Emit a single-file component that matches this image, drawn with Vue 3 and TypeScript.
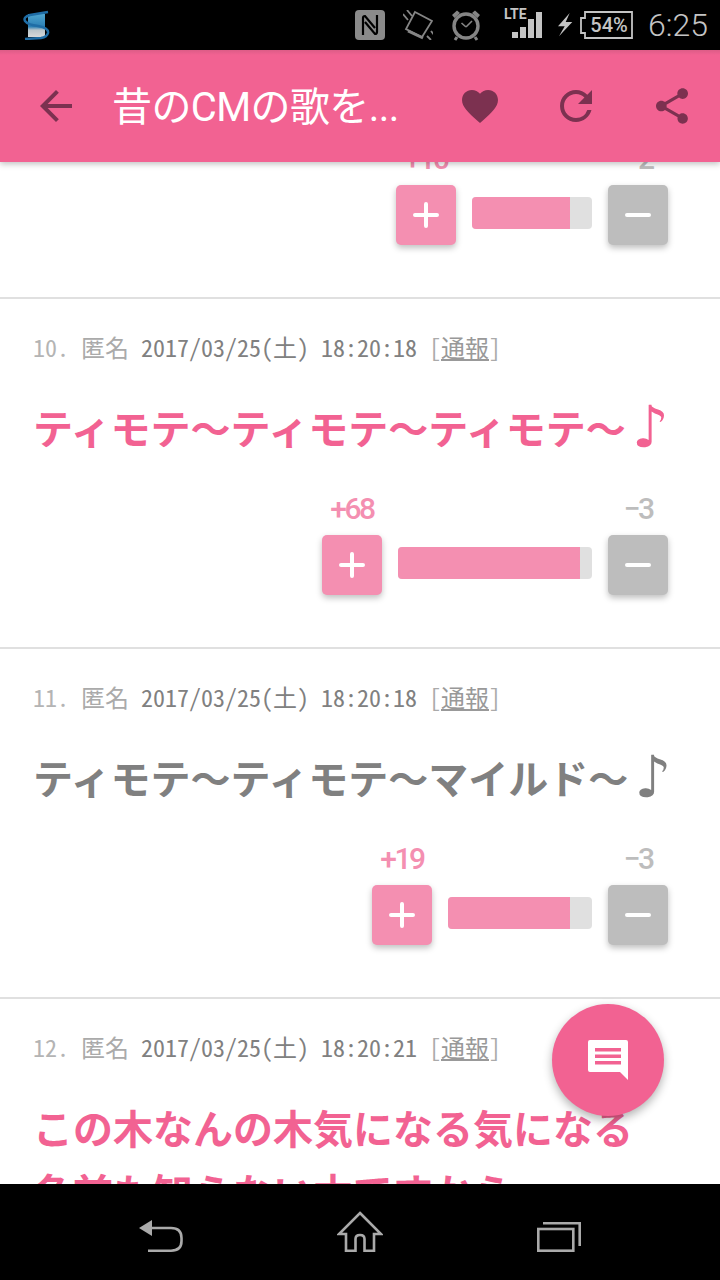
<script setup lang="ts">
interface Votes {
  plus: number
  minus: number
  barWidth: number
  fillWidth: number
}

interface Comment {
  no: number
  date?: string
  body?: string[]
  note?: boolean
  hot?: boolean
  votes?: Votes
}

const comments: Comment[] = [
  // only the vote row of this one is left below the app bar
  { no: 9, votes: { plus: 10, minus: 2, barWidth: 120, fillWidth: 98 } },
  {
    no: 10,
    date: '2017/03/25(土) 18:20:18',
    body: ['ティモテ〜ティモテ〜ティモテ〜'],
    note: true,
    hot: true,
    votes: { plus: 68, minus: 3, barWidth: 194, fillWidth: 182 }
  },
  {
    no: 11,
    date: '2017/03/25(土) 18:20:18',
    body: ['ティモテ〜ティモテ〜マイルド〜'],
    note: true,
    votes: { plus: 19, minus: 3, barWidth: 144, fillWidth: 122 }
  },
  {
    no: 12,
    date: '2017/03/25(土) 18:20:21',
    body: ['この木なんの木気になる気になる', '名前も知らない木ですから'],
    hot: true
  }
]
</script>

<template>
  <div class="phone">
    <div class="status-bar">
      <svg class="app-logo" width="28" height="30" viewBox="0 0 28 30">
        <defs>
          <linearGradient id="screen" x1="0" y1="0" x2="0" y2="1">
            <stop offset="0" stop-color="#4fa6d0" />
            <stop offset="0.55" stop-color="#2b7fb4" />
            <stop offset="0.7" stop-color="#b9c4ca" />
            <stop offset="1" stop-color="#d8d8d8" />
          </linearGradient>
        </defs>
        <rect x="5" y="4" width="17" height="23" fill="url(#screen)" />
        <path d="M25 2 7 5Q0 7 2 11 5 15 15 16 26 18 25 23 24 27 18 28L2 29" fill="none" stroke="#1f6da6" stroke-width="2.500" />
      </svg>
      <div class="status-icons">
        <svg width="30" height="30" viewBox="0 0 30 30">
          <rect width="30" height="30" rx="4" fill="#8a8a8a" />
          <path d="M8 25V8Q8 6 10 6L20 18M22 5V22Q22 24 20 24L10 12" fill="none" stroke="#000" stroke-width="2.200" />
        </svg>
        <svg class="vibrate" width="30" height="30" viewBox="0 0 30 30" fill="none" stroke="#858585" stroke-width="1.800">
          <path d="M12 2 29 11 19 27 3 19Z" />
          <path d="M5 21 20 28" stroke-width="3" />
          <path d="M0 4 5 10M4 0 9 6M24 26 28 30M28 21 32 26" />
        </svg>
        <svg class="alarm" width="30" height="32" viewBox="0 0 30 32" fill="none" stroke="#858585">
          <circle cx="15" cy="17" r="12" stroke-width="3.400" />
          <path d="M1 6 6 1.500 9 4 3.500 9ZM29 6 24 1.500 21 4 26.500 9Z" fill="#858585" stroke="none" />
          <path d="M15 18 10.500 14M15 18 21 12" stroke-width="1.600" />
          <path d="M6 28 4 31M24 28 26 31" stroke-width="3" />
        </svg>
        <div class="signal">
          <span class="lte">LTE</span>
          <div class="signal-bars">
            <i class="bar-1" />
            <i class="bar-2" />
            <i class="bar-3" />
            <i class="bar-4" />
          </div>
        </div>
        <svg class="bolt" width="16" height="24" viewBox="0 0 16 24">
          <path d="M12.700 0 1 13.300H7.700L2 23.300 15.300 9H8.700Z" fill="#c4c4c4" />
        </svg>
        <svg class="battery" width="54" height="28" viewBox="0 0 54 28">
          <path d="M6 1H53V27H6V22H2V7H6Z" fill="none" stroke="#c4c4c4" stroke-width="1.800" />
          <text x="30" y="21" text-anchor="middle" class="battery-text">54%</text>
        </svg>
        <span class="clock">6:25</span>
      </div>
    </div>

    <header class="app-bar">
      <svg width="32" height="32" viewBox="4 4 16 16">
        <path d="M20 11H7.830l5.590-5.590L12 4l-8 8 8 8 1.410-1.410L7.830 13H20v-2z" fill="#7c3150" />
      </svg>
      <h1 class="title">昔のCMの歌を...</h1>
      <svg width="36" height="33" viewBox="2 3 20 18.350">
        <path d="M12 21.350l-1.450-1.320C5.400 15.360 2 12.280 2 8.500 2 5.420 4.420 3 7.500 3c1.740 0 3.410.810 4.500 2.090C13.090 3.810 14.760 3 16.500 3 19.580 3 22 5.420 22 8.500c0 3.780-3.400 6.860-8.550 11.540L12 21.350z" fill="#7c3150" />
      </svg>
      <svg class="reload" width="32" height="32" viewBox="4 4 16 16">
        <path d="M17.650 6.350A7.958 7.958 0 0 0 12 4c-4.420 0-7.990 3.580-7.990 8s3.570 8 7.990 8c3.730 0 6.840-2.550 7.730-6h-2.080A5.990 5.990 0 0 1 12 18c-3.310 0-6-2.690-6-6s2.690-6 6-6c1.660 0 3.140.690 4.220 1.780L13 11h7V4l-2.350 2.350z" fill="#7c3150" />
      </svg>
      <svg class="share" width="32" height="36" viewBox="3 2 18 20">
        <path d="M18 16.080c-.760 0-1.440.300-1.960.770L8.910 12.700c.050-.230.090-.460.090-.700s-.040-.470-.090-.700l7.050-4.110c.540.500 1.250.810 2.040.810 1.660 0 3-1.340 3-3s-1.340-3-3-3-3 1.340-3 3c0 .240.040.470.090.700L8.040 9.810C7.500 9.310 6.790 9 6 9c-1.660 0-3 1.340-3 3s1.340 3 3 3c.790 0 1.500-.310 2.040-.810l7.120 4.160c-.050.210-.080.430-.080.650 0 1.610 1.310 2.920 2.920 2.920 1.610 0 2.920-1.310 2.920-2.920s-1.310-2.920-2.920-2.920z" fill="#7c3150" />
      </svg>
    </header>

    <main class="content">
      <article v-for="c in comments" :key="c.no" class="comment" :class="{ partial: !c.date }">
        <div v-if="c.date" class="meta">
          <span class="no">{{ c.no + '. ' }}</span>
          <span class="author">匿名 </span>
          <span class="date">{{ c.date + ' ' }}</span>
          <span class="report">[<u>通報</u>]</span>
        </div>
        <div v-if="c.body" class="body" :class="{ hot: c.hot }">
          <p v-for="line in c.body" :key="line">{{ line }}<span v-if="c.note" class="note">♪</span></p>
        </div>
        <div v-if="c.votes" class="votes">
          <div class="vote">
            <span class="count plus">+{{ c.votes.plus }}</span>
            <button class="vote-btn plus-btn" type="button">
              <svg width="28" height="28" viewBox="0 0 28 28" stroke="#fff" stroke-width="4" stroke-linecap="round">
                <path d="M3 14H25M14 3V25" />
              </svg>
            </button>
          </div>
          <div class="track" :style="{ width: c.votes.barWidth + 'px' }">
            <div class="fill" :style="{ width: c.votes.fillWidth + 'px' }" />
          </div>
          <div class="vote">
            <span class="count minus">−{{ c.votes.minus }}</span>
            <button class="vote-btn minus-btn" type="button">
              <svg width="28" height="28" viewBox="0 0 28 28" stroke="#fff" stroke-width="4" stroke-linecap="round">
                <path d="M3 14H25" />
              </svg>
            </button>
          </div>
        </div>
      </article>
      <button class="fab" type="button">
        <svg width="40" height="40" viewBox="0 0 40 40">
          <path d="M2 0H38Q40 0 40 2V40L32 32H2Q0 32 0 30V2Q0 0 2 0Z" fill="#fff" />
          <path d="M7 8H33V11.500H7ZM7 14.500H33V18H7ZM7 21H33V24.500H7Z" fill="#f26292" />
        </svg>
      </button>
    </main>

    <nav class="nav-bar">
      <svg width="44" height="32" viewBox="0 0 44 32" fill="none" stroke="#aaa" stroke-width="2.600">
        <path d="M0 8 13 0V16Z" fill="#aaa" stroke="none" />
        <path d="M12 8H32Q42.500 8 42.500 18V21Q42.500 30.700 32 30.700H9" />
      </svg>
      <svg width="46" height="41" viewBox="0 0 46 41" fill="none" stroke="#aaa" stroke-width="2.600">
        <path d="M23 2 44 23H37V39.700H27.500V28Q27.500 24 23 24 18.500 24 18.500 28V39.700H9V23H2Z" />
      </svg>
      <svg width="44" height="30" viewBox="0 0 44 30" fill="none" stroke="#aaa" stroke-width="2.600">
        <rect x="1.300" y="7" width="35" height="21.700" />
        <path d="M6 1.300H42.700V24" />
      </svg>
    </nav>
  </div>
</template>

<style>
html,
body {
  margin: 0;
  background: #000;
}
</style>

<style scoped>
.phone {
  position: relative;
  display: flex;
  flex-direction: column;
  width: 720px;
  height: 1280px;
  overflow: hidden;
  background: #fff;
  font-family: "Noto Sans CJK JP", "Noto Sans", sans-serif;
}

.status-bar {
  display: flex;
  flex: none;
  align-items: center;
  justify-content: space-between;
  height: 50px;
  padding: 0 12px 0 23px;
  box-sizing: border-box;
  background: #000;
}

.status-icons {
  display: flex;
  align-items: center;
}

.vibrate,
.alarm {
  margin-left: 18px;
}

.signal {
  position: relative;
  width: 38px;
  height: 30px;
  margin-left: 23px;
}

.lte {
  position: absolute;
  top: -4px;
  left: 0;
  color: #c4c4c4;
  font: 700 14px "Roboto", sans-serif;
}

.signal-bars {
  position: absolute;
  right: 0;
  bottom: 2px;
  display: flex;
  gap: 2px;
  align-items: flex-end;
}

.signal-bars i {
  display: block;
  width: 6px;
  background: #c4c4c4;
}

.bar-1 {
  height: 6px;
}

.bar-2 {
  height: 11px;
}

.bar-3 {
  height: 19px;
}

.bar-4 {
  height: 26px;
}

.bolt {
  margin-left: 15px;
}

.battery {
  margin-left: 6px;
}

.battery-text {
  fill: #c4c4c4;
  font: 500 20px "Roboto", sans-serif;
}

.clock {
  margin-left: 15px;
  color: #c4c4c4;
  font: 300 32px/1 "Roboto", sans-serif;
}

.app-bar {
  z-index: 2;
  display: flex;
  flex: none;
  align-items: center;
  height: 112px;
  padding-left: 40px;
  box-sizing: border-box;
  background: linear-gradient(#dd5c87, #f26292 5px);
  box-shadow: 0 2px 6px rgba(0, 0, 0, 0.25);
}

.title {
  width: 350px;
  margin: 0 0 4px 40px;
  color: #fff;
  font-family: "Roboto", "Noto Sans CJK JP", sans-serif;
  font-size: 40px;
  font-weight: 400;
  letter-spacing: -0.6px;
  white-space: nowrap;
}

.reload {
  margin-left: 62px;
}

.share {
  margin-left: 64px;
}

.content {
  position: relative;
  flex: 1;
  min-height: 0;
  overflow: hidden;
}

.comment {
  display: flex;
  flex-direction: column;
  height: 350px;
  padding: 30px 52px 52px 34px;
  border-bottom: 2px solid #e0e0e0;
  box-sizing: border-box;
}

/* vote row pinned to the bottom, its count runs up under the app bar */
.comment.partial {
  height: 137px;
  padding-top: 0;
  justify-content: flex-end;
}

.meta {
  flex: none;
  height: 36px;
  margin-left: -1px;
  font-size: 24px;
  font-feature-settings: "hwid";
  line-height: 36px;
  white-space: pre;
}

.no {
  color: #b4b4b4;
}

.author {
  color: #aaa;
}

.date {
  color: #808080;
}

.report {
  color: #aaa;
}

.report u {
  color: #999;
}

.body {
  flex: none;
  margin: 30px 0 0 -1px;
  color: #808080;
  font-size: 40px;
  font-weight: 700;
  line-height: 64px;
  white-space: nowrap;
}

.body.hot {
  color: #f26292;
}

.body p {
  margin: 0;
}

.note {
  margin-left: 6px;
  font-family: "DejaVu Sans", sans-serif;
  font-size: 58px;
  line-height: 0;
  vertical-align: -3px;
}

.votes {
  display: flex;
  flex: none;
  gap: 16px;
  align-items: flex-end;
  justify-content: flex-end;
  margin-top: auto;
}

.vote {
  display: flex;
  flex-direction: column;
  align-items: center;
  width: 60px;
}

.count {
  height: 42px;
  font: 500 30px/32px "Roboto", sans-serif;
  letter-spacing: -2.500px;
}

.count.plus {
  color: #f48fb1;
}

.count.minus {
  color: #bdbdbd;
}

.vote-btn {
  display: flex;
  align-items: center;
  justify-content: center;
  width: 60px;
  height: 60px;
  padding: 0;
  border: 0;
  border-radius: 5px;
  box-shadow: 0 3px 6px rgba(0, 0, 0, 0.25);
}

.plus-btn {
  background: #f48fb1;
}

.minus-btn {
  background: #bdbdbd;
}

.track {
  height: 32px;
  margin-bottom: 16px;
  overflow: hidden;
  border-radius: 4px;
  background: #e0e0e0;
}

.fill {
  height: 100%;
  background: #f48fb1;
}

.fab {
  position: absolute;
  top: 842px;
  left: 552px;
  display: flex;
  align-items: center;
  justify-content: center;
  width: 112px;
  height: 112px;
  padding: 0;
  border: 0;
  border-radius: 50%;
  background: #f26292;
  box-shadow: 0 4px 10px rgba(0, 0, 0, 0.3);
}

.nav-bar {
  z-index: 2;
  display: flex;
  flex: none;
  gap: 154px;
  align-items: flex-end;
  justify-content: center;
  height: 96px;
  padding-bottom: 28px;
  box-sizing: border-box;
  background: #000;
}
</style>
